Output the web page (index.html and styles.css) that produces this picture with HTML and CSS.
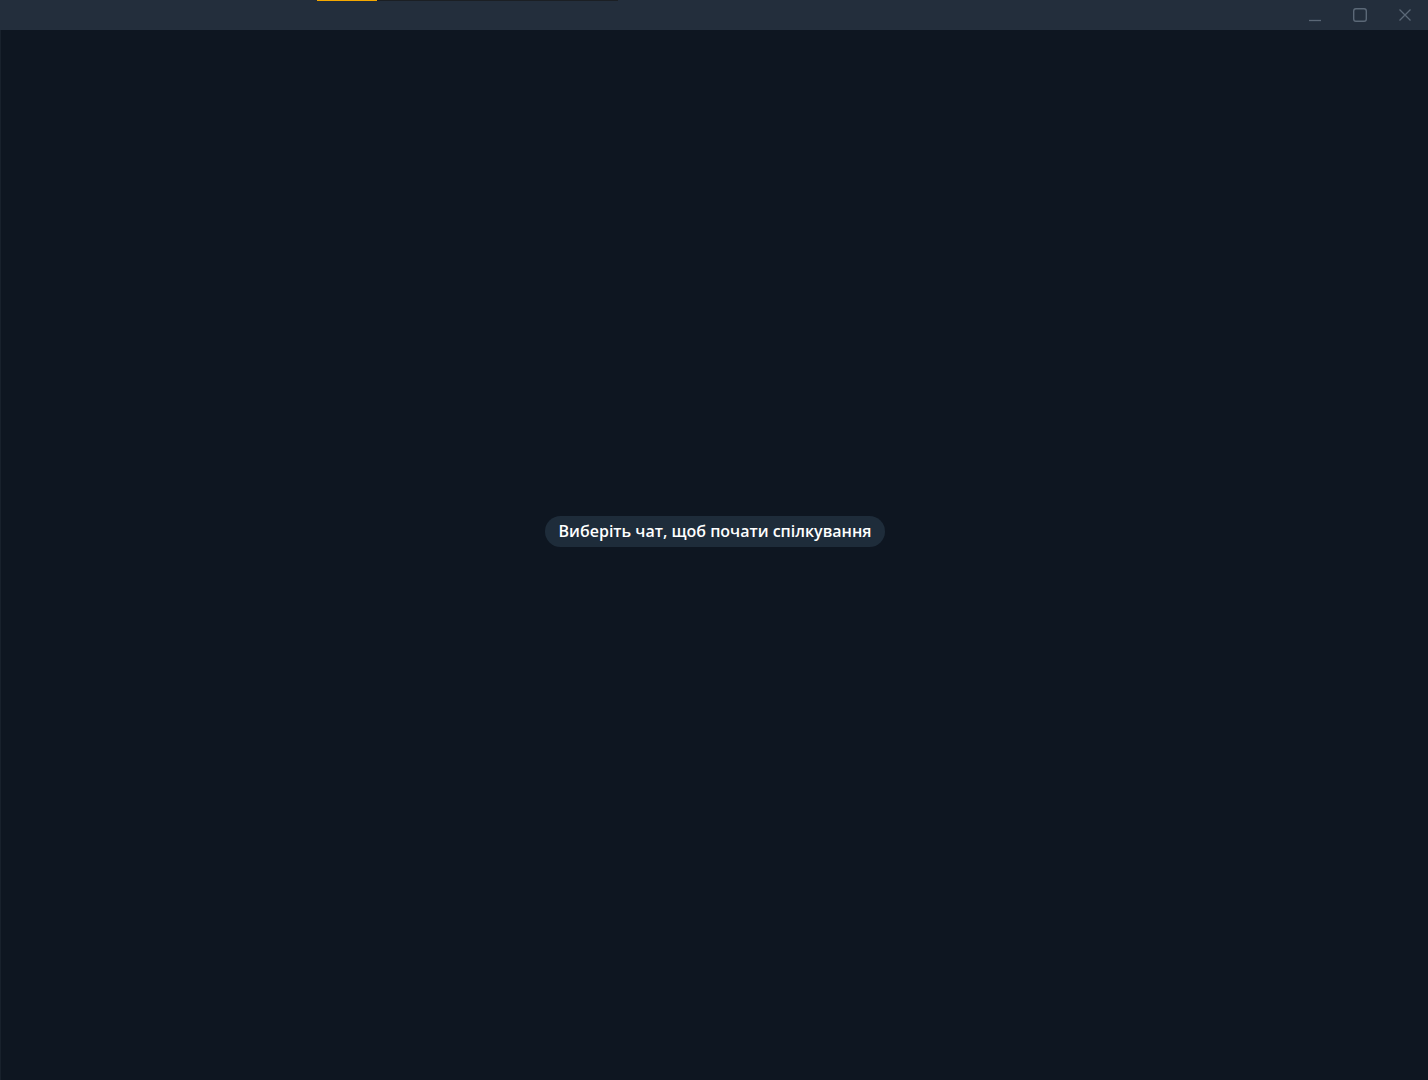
FILE: index.html
```html
<!DOCTYPE html>
<html lang="uk">
<head>
<meta charset="utf-8">
<link rel="stylesheet" href="styles.css">
</head>
<body>
<div class="app">
  <header class="titlebar">
    <div class="tabline">
      <span class="tab-active"></span>
      <span class="tab-rest"></span>
    </div>
    <div class="controls">
      <span class="ctl">
        <svg width="14" height="14" viewBox="0 0 14 14"><path d="M1 12.5H13" stroke="#5b6877" stroke-width="1.3"/></svg>
      </span>
      <span class="ctl">
        <svg width="16" height="16" viewBox="0 0 16 16"><rect x="1.7" y="1.7" width="12.6" height="12.6" rx="2.2" fill="none" stroke="#5b6877" stroke-width="1.4"/></svg>
      </span>
      <span class="ctl">
        <svg width="14" height="14" viewBox="0 0 14 14"><path d="M1.5 1.5L12.5 12.5M12.5 1.5L1.5 12.5" stroke="#5b6877" stroke-width="1.3"/></svg>
      </span>
    </div>
  </header>
  <main class="content">
    <div class="pill">Виберіть чат, щоб почати спілкування</div>
  </main>
</div>
</body>
</html>
```
FILE: styles.css
```css
html, body {
  margin: 0;
  padding: 0;
  height: 100%;
  background: #0e1621;
}
.app {
  display: flex;
  flex-direction: column;
  height: 1080px;
  font-family: "Open Sans", "Noto Sans", sans-serif;
}
.titlebar {
  height: 30px;
  flex: 0 0 30px;
  background: #232e3c;
  position: relative;
  display: flex;
  justify-content: flex-end;
}
.tabline {
  position: absolute;
  left: 317px;
  top: 0;
  display: flex;
  height: 1px;
}
.tab-active {
  width: 60px;
  background: #f5a800;
}
.tab-rest {
  width: 241px;
  background: #1b1f24;
}
.controls {
  display: flex;
  align-items: flex-start;
  padding-top: 7px;
  gap: 29px;
  padding-right: 15px;
}
.ctl {
  display: flex;
  width: 16px;
  height: 16px;
  align-items: center;
  justify-content: center;
}
.content {
  flex: 1;
  background: #0e1621;
  border-left: 1px solid #18212c;
  display: flex;
  align-items: center;
  justify-content: center;
  padding-bottom: 47px;
}
.pill {
  background: #1e2c3a;
  color: #ffffff;
  font-size: 16px;
  font-weight: 600;
  height: 31px;
  line-height: 31px;
  padding: 0 14px;
  border-radius: 16px;
  margin-left: 1px;
}
```
